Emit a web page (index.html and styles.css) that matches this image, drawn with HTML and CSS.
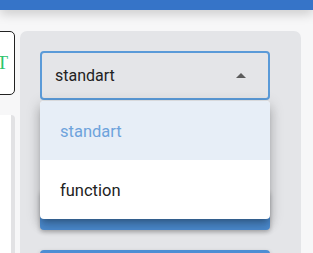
FILE: index.html
```html
<!DOCTYPE html>
<html lang="en">
<head>
  <meta charset="UTF-8">
  <title>Mode</title>
  <meta name="viewport" content="width=device-width, initial-scale=1.0">
  <link rel="stylesheet" href="styles.css">
</head>
<body>

<header class="topbar"></header>

<main class="page">
  <aside class="side">
    <div class="logo-box"><span class="logo-t">T</span></div>
    <div class="side-panel"></div>
  </aside>

  <section class="card">
    <div class="select-wrap">
      <div class="select">
        <span class="select-value">standart</span>
        <span class="caret"></span>
      </div>
      <ul class="menu">
        <li class="menu-item active">standart</li>
        <li class="menu-item">function</li>
      </ul>
    </div>
    <button class="btn">Run</button>
    <button class="btn"></button>
  </section>
</main>

</body>
</html>
```

FILE: styles.css
```css
:root {
  --blue: #3674c8;
  --accent: #5a9ad8;
  --panel: #e4e5e8;
  --text: #222;
}

body {
  margin: 0;
  font-family: Roboto, 'Noto Sans', sans-serif;
  background: #f7f7f8;
  overflow: hidden;
}

.topbar {
  height: 10px;
  background: var(--blue);
  box-shadow: 0 3px 12px rgba(0,0,0,0.22);
  position: relative;
  z-index: 2;
}

.page {
  display: flex;
  padding-top: 21px;
  gap: 5px;
}

.side {
  width: 15px;
  overflow: hidden;
  flex-shrink: 0;
}

.logo-box {
  margin-left: -40px;
  width: 55px;
  height: 64px;
  border: 1.5px solid #222;
  border-radius: 5px;
  background: #fff;
  display: flex;
  align-items: center;
  justify-content: flex-end;
  padding-right: 6px;
  box-sizing: border-box;
}

.logo-t {
  font-family: 'Liberation Serif', serif;
  font-size: 19px;
  color: #2bc46a;
}

.side-panel {
  margin-top: 20px;
  margin-left: -20px;
  height: 200px;
  background: #fff;
  border-right: 4px solid #e2e2e4;
  border-radius: 4px;
}

.card {
  width: 281px;
  height: 240px;
  background: var(--panel);
  border-radius: 7px;
  padding: 20px 31px 0 20px;
  box-sizing: border-box;
}

.select-wrap {
  position: relative;
}

.select {
  height: 49px;
  border: 2px solid var(--accent);
  border-radius: 4px;
  display: flex;
  align-items: center;
  justify-content: space-between;
  padding: 0 22px 0 13px;
  box-sizing: border-box;
}

.select-value {
  font-size: 16px;
  color: var(--text);
}

.caret {
  width: 0;
  height: 0;
  border-left: 5px solid transparent;
  border-right: 5px solid transparent;
  border-bottom: 5px solid #5c5c5c;
}

.menu {
  position: absolute;
  top: 50px;
  left: 0;
  right: 0;
  margin: 0;
  padding: 0;
  list-style: none;
  background: #fff;
  border-radius: 4px;
  overflow: hidden;
  z-index: 3;
  box-shadow: 0 5px 5px -3px rgba(0,0,0,0.2), 0 8px 10px 1px rgba(0,0,0,0.14), 0 3px 14px 2px rgba(0,0,0,0.12);
}

.menu-item {
  height: 59px;
  display: flex;
  align-items: center;
  padding: 2px 0 0 20px;
  box-sizing: border-box;
  font-size: 16.5px;
  color: var(--text);
}

.menu-item.active {
  background: #e7eef7;
  color: #6ea3dc;
}

.btn {
  display: block;
  width: 100%;
  height: 40px;
  margin-top: 90px;
  border: none;
  border-radius: 4px;
  background: #4d8ed4;
  color: #fff;
  font-family: Roboto, sans-serif;
  font-size: 14px;
  box-shadow: 0 2px 4px rgba(0,0,0,0.25);
}

.btn + .btn {
  margin-top: 20px;
}
```
